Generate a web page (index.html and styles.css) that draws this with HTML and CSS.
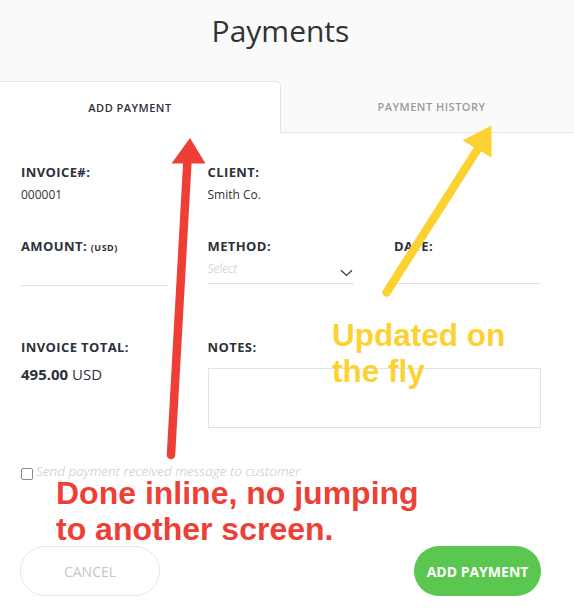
FILE: index.html
```html
<!DOCTYPE html>
<html lang="en">
<head>
<meta charset="utf-8">
<title>Payments</title>
<link rel="stylesheet" href="styles.css">
</head>
<body>
<div class="page">
  <header class="header">
    <h1 class="title">Payments</h1>
  </header>
  <nav class="tabs">
    <div class="tab tab-active">ADD PAYMENT</div>
    <div class="tab tab-inactive">PAYMENT HISTORY</div>
  </nav>
  <main class="form">
    <div class="row">
      <div class="field">
        <div class="label">INVOICE#:</div>
        <div class="value">000001</div>
      </div>
      <div class="field">
        <div class="label">CLIENT:</div>
        <div class="value">Smith Co.</div>
      </div>
      <div class="field"></div>
    </div>
    <div class="row row-inputs">
      <div class="field">
        <div class="label">AMOUNT: <span class="label-small">(USD)</span></div>
        <div class="input"></div>
      </div>
      <div class="field">
        <div class="label">METHOD:</div>
        <div class="input input-select">
          <span class="placeholder">Select</span>
          <svg class="chevron" width="13" height="8" viewBox="0 0 13 8"><path d="M1 1.2 L6.5 6.5 L12 1.2" fill="none" stroke="#333a44" stroke-width="1.2"/></svg>
        </div>
      </div>
      <div class="field">
        <div class="label">DATE:</div>
        <div class="input"></div>
      </div>
    </div>
    <div class="row row-total">
      <div class="field">
        <div class="label">INVOICE TOTAL:</div>
        <div class="total"><b>495.00</b> USD</div>
      </div>
      <div class="field field-wide">
        <div class="label">NOTES:</div>
        <div class="notes"></div>
      </div>
    </div>
    <label class="check-row">
      <span class="checkbox"></span>
      <span class="check-text">Send payment received message to customer</span>
    </label>
    <div class="actions">
      <button class="btn btn-cancel">CANCEL</button>
      <button class="btn btn-primary">ADD PAYMENT</button>
    </div>
  </main>

  <div class="overlay">
    <svg class="arrows" width="574" height="613" viewBox="0 0 574 613">
      <line x1="187.5" y1="160" x2="171" y2="455" stroke="#ee3f37" stroke-width="8.5" stroke-linecap="round"/>
      <polygon points="190,138 171.5,163.5 205.5,163.5" fill="#ee3f37"/>
      <line x1="386.5" y1="292.5" x2="479" y2="147" stroke="#fcd233" stroke-width="8.5" stroke-linecap="round"/>
      <polygon points="491.5,125.5 462.5,140.5 491.5,157.5" fill="#fcd233"/>
    </svg>
    <div class="note note-yellow">Updated on<br>the fly</div>
    <div class="note note-red">Done inline, no jumping<br>to another screen.</div>
  </div>
</div>
</body>
</html>
```

FILE: styles.css
```css
* { box-sizing: border-box; }

html, body {
  margin: 0;
  padding: 0;
  background: #ffffff;
}

body {
  font-family: "Open Sans", "Noto Sans", sans-serif;
  color: #2c313b;
}

.page {
  position: relative;
  width: 574px;
  height: 613px;
  overflow: hidden;
  background: #ffffff;
}

.header {
  height: 81px;
  background: #fafafa;
  padding: 10px 13px 0 0;
}

.title {
  margin: 0;
  text-align: center;
  font-size: 30px;
  font-weight: 400;
  line-height: 42px;
  color: #333333;
}

.tabs {
  display: flex;
  height: 52px;
  background: #fafafa;
}

.tab {
  display: flex;
  align-items: center;
  justify-content: center;
  font-size: 11px;
  font-weight: 600;
  letter-spacing: 0.5px;
}

.tab-active {
  width: 281px;
  padding-right: 20px;
  background: #ffffff;
  color: #2c313b;
  border-top: 1px solid #e4e4e4;
  border-right: 1px solid #e4e4e4;
  border-top-right-radius: 5px;
}

.tab-inactive {
  flex: 1;
  padding-left: 8px;
  color: #9a9a9a;
  border-bottom: 1px solid #e4e4e4;
}

.form {
  padding: 30px 33px 0 21px;
}

.row {
  display: grid;
  grid-template-columns: repeat(3, 146.5px);
  column-gap: 40px;
}

.row-inputs { margin-top: 33px; }
.row-total { margin-top: 52px; }

.label {
  font-size: 13px;
  font-weight: 700;
  line-height: 18px;
  letter-spacing: 0.4px;
  color: #2c313b;
}

.label-small {
  font-size: 9px;
  letter-spacing: 0.5px;
}

.value {
  margin-top: 5px;
  font-size: 12px;
  line-height: 18px;
  color: #333333;
}

.input {
  position: relative;
  height: 29px;
  padding-top: 5px;
  border-bottom: 1px solid #e2e2e2;
}

.input-select {
  display: flex;
  justify-content: space-between;
  align-items: flex-start;
}

.placeholder {
  font-size: 12px;
  font-style: italic;
  font-weight: 300;
  line-height: 18px;
  color: #c2c2c2;
}

.chevron {
  margin-top: 9px;
  margin-right: 1px;
}

.total {
  margin-top: 8px;
  font-size: 15px;
  line-height: 20px;
  color: #2c313b;
}

.total b { font-weight: 700; }

.field-wide { grid-column: 2 / span 2; }

.notes {
  margin-top: 12px;
  height: 60px;
  border: 1px solid #e2e2e2;
}

.check-row {
  display: flex;
  align-items: flex-start;
  margin-top: 34px;
  gap: 3px;
}

.checkbox {
  width: 12px;
  height: 12px;
  margin-top: 6px;
  border: 1px solid #8a8a8a;
  border-radius: 2px;
  background: #ffffff;
}

.check-text {
  font-size: 13.6px;
  font-style: italic;
  font-weight: 300;
  line-height: 18px;
  color: #c4c4c4;
}

.actions {
  display: flex;
  justify-content: space-between;
  margin-top: 66px;
  margin-left: -1px;
}

.btn {
  height: 50px;
  border-radius: 25px;
  font-family: "Open Sans", "Noto Sans", sans-serif;
  font-size: 14px;
  padding: 0;
}

.btn-cancel {
  width: 140px;
  background: #ffffff;
  border: 1px solid #e6e6e6;
  color: #c6c6c6;
  font-weight: 400;
}

.btn-primary {
  width: 127px;
  background: #5ac751;
  border: none;
  color: #ffffff;
  font-weight: 700;
}

.overlay {
  position: absolute;
  inset: 0;
  pointer-events: none;
}

.arrows {
  position: absolute;
  left: 0;
  top: 0;
}

.note {
  position: absolute;
  font-family: "Liberation Sans", Arial, sans-serif;
  font-weight: 700;
  font-size: 31.5px;
  line-height: 36px;
  white-space: nowrap;
}

.note-yellow {
  left: 332px;
  top: 317px;
  color: #fcd233;
}

.note-red {
  left: 56px;
  top: 475px;
  font-size: 32px;
  color: #ee3f37;
}
```
